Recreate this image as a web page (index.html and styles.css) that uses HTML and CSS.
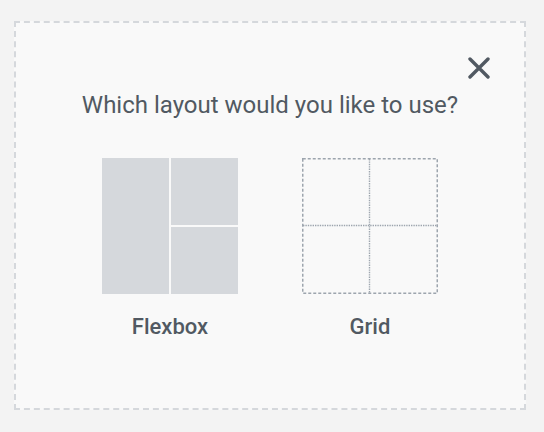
FILE: index.html
```html
<!DOCTYPE html>
<html>
<head>
<meta charset="utf-8">
<link rel="stylesheet" href="styles.css">
</head>
<body>
<div class="picker">
  <button class="close" aria-label="Close">
    <svg width="22" height="22" viewBox="0 0 22 22"><path d="M2 2 L20 20 M20 2 L2 20" stroke="#515962" stroke-width="3.4" stroke-linecap="round" fill="none"/></svg>
  </button>
  <h2 class="title">Which layout would you like to use?</h2>
  <div class="options">
    <div class="option">
      <div class="icon flex-icon">
        <div class="cell tall"></div>
        <div class="cell"></div>
        <div class="cell"></div>
      </div>
      <div class="label">Flexbox</div>
    </div>
    <div class="option">
      <div class="icon grid-icon">
        <svg width="136" height="136" viewBox="0 0 136 136">
          <rect x="0.75" y="0.75" width="134.5" height="134.5" fill="none" stroke="#9da5ae" stroke-width="1.5" stroke-dasharray="3 2"/>
          <line x1="67.5" y1="1" x2="67.5" y2="135" stroke="#9da5ae" stroke-width="1.4" stroke-dasharray="1.4 1"/>
          <line x1="1" y1="67.5" x2="135" y2="67.5" stroke="#9da5ae" stroke-width="1.4" stroke-dasharray="1.4 1"/>
        </svg>
      </div>
      <div class="label">Grid</div>
    </div>
  </div>
</div>
</body>
</html>
```
FILE: styles.css
```css
html, body {
  margin: 0;
  padding: 0;
  background: #f3f3f3;
}
body {
  padding: 21px 18px 22px 14px;
  font-family: Roboto, "Liberation Sans", sans-serif;
}
.picker {
  position: relative;
  box-sizing: border-box;
  width: 512px;
  height: 389px;
  border: 2px dashed #d5d8dc;
  background: #f9f9f9;
  display: flex;
  flex-direction: column;
  align-items: center;
  padding-top: 67px;
}
.close {
  position: absolute;
  top: 34px;
  right: 34px;
  width: 22px;
  height: 22px;
  padding: 0;
  border: 0;
  background: none;
  display: flex;
}
.title {
  margin: 0;
  font-size: 24px;
  font-weight: 400;
  color: #515962;
  line-height: 30px;
}
.options {
  display: flex;
  gap: 64px;
  margin-top: 38px;
}
.option {
  display: flex;
  flex-direction: column;
  align-items: center;
}
.icon {
  width: 136px;
  height: 136px;
}
.flex-icon {
  display: grid;
  grid-template-columns: 67px 67px;
  grid-template-rows: 67px 67px;
  gap: 2px;
}
.cell {
  background: #d5d8dc;
}
.cell.tall {
  grid-row: 1 / span 2;
}
.grid-icon svg {
  display: block;
}
.label {
  margin-top: 20px;
  font-size: 22px;
  font-weight: 500;
  color: #515962;
  line-height: 26px;
}
```
